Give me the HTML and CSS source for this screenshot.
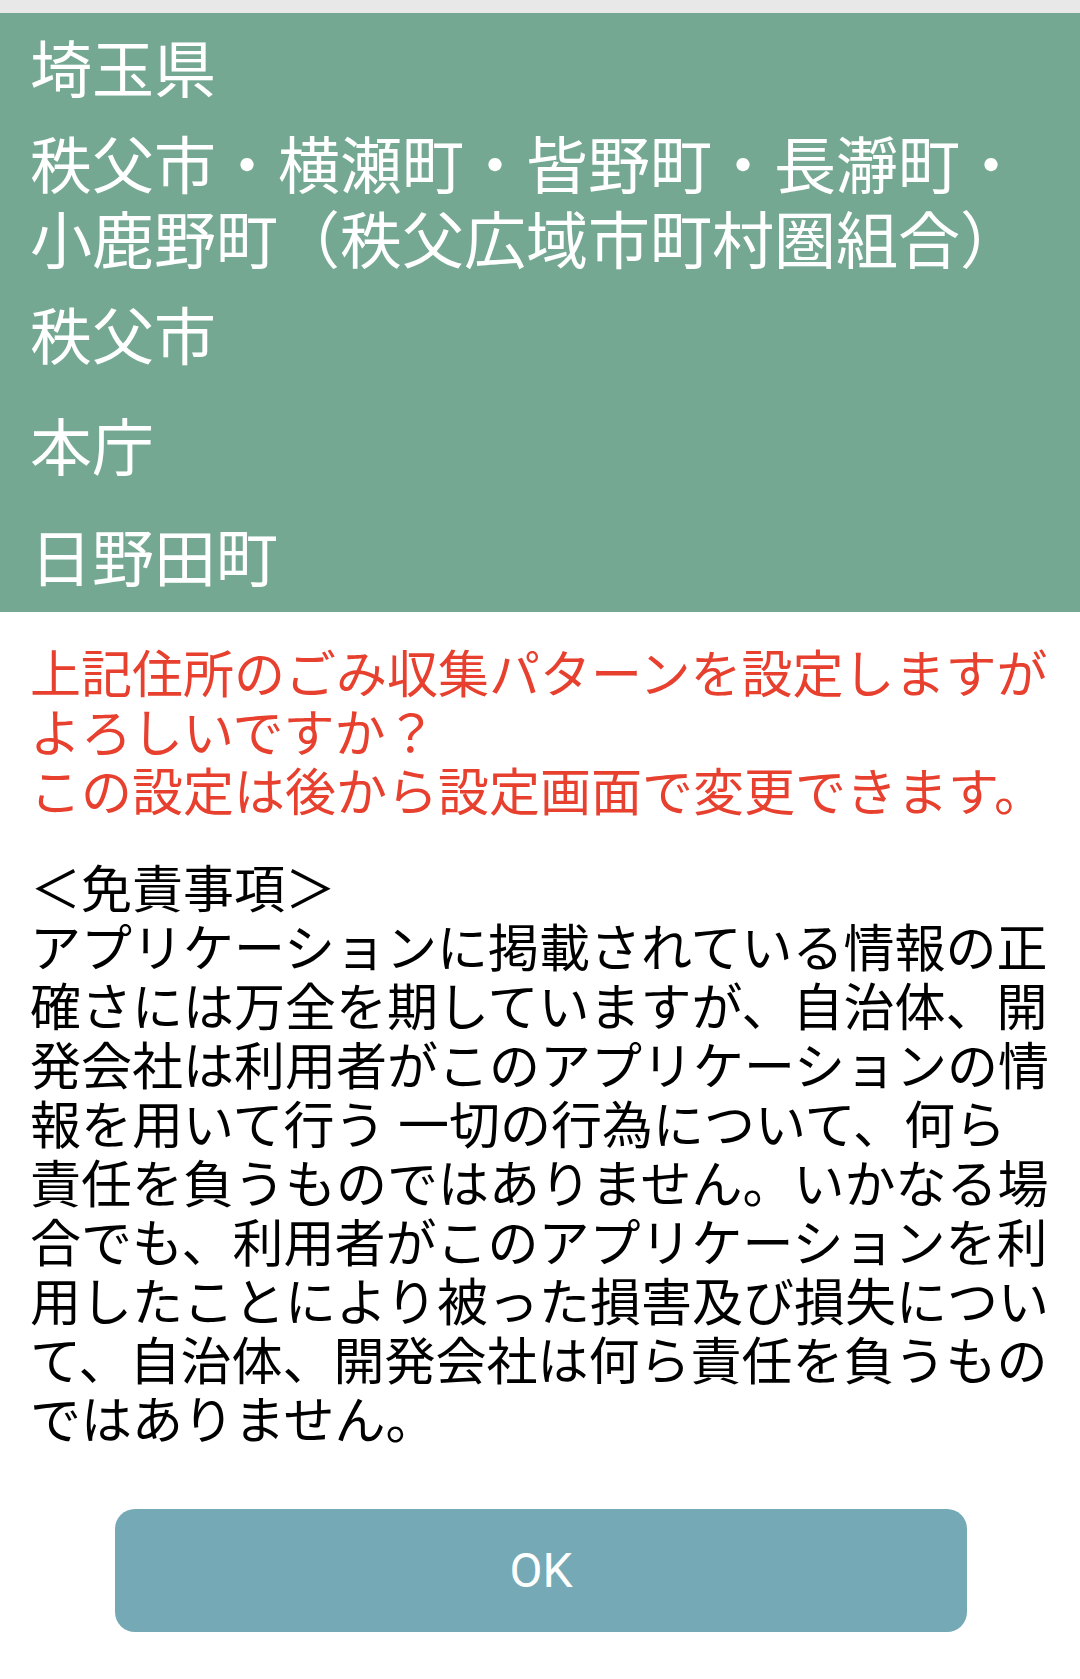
FILE: index.html
```html
<!DOCTYPE html>
<html lang="ja">
<head>
<meta charset="utf-8">
<title>確認</title>
<link rel="stylesheet" href="styles.css">
</head>
<body>
<div class="statusbar"></div>
<section class="address">
  <div class="item">埼玉県</div>
  <div class="item">秩父市・横瀬町・皆野町・長瀞町・小鹿野町（秩父広域市町村圏組合）</div>
  <div class="item">秩父市</div>
  <div class="item spaced">本庁</div>
  <div class="item spaced">日野田町</div>
</section>
<main class="content">
  <p class="confirm">上記住所のごみ収集パターンを設定しますがよろしいですか？<br>この設定は後から設定画面で変更できます。</p>
  <p class="disclaimer">＜免責事項＞<br>アプリケーションに掲載されている情報の正確さには万全を期していますが、自治体、開発会社は利用者がこのアプリケーションの情報を用いて行う 一切の行為について、何ら責任を負うものではありません。いかなる場合でも、利用者がこのアプリケーションを利用したことにより被った損害及び損失について、自治体、開発会社は何ら責任を負うものではありません。</p>
  <div class="actions">
    <button class="ok" type="button">OK</button>
  </div>
</main>
</body>
</html>
```

FILE: styles.css
```css
html, body {
  margin: 0;
  padding: 0;
  background: #ffffff;
}

body {
  width: 1080px;
  font-family: Roboto, "Noto Sans CJK JP", sans-serif;
}

.statusbar {
  height: 13px;
  background: #e8e8e8;
}

.address {
  background: #74a892;
  color: #ffffff;
  padding: 21px 40px 14px 30px;
  display: flex;
  flex-direction: column;
  gap: 21px;
  font-size: 62px;
  line-height: 75px;
}

.address .spaced {
  margin-top: 15px;
}

.content {
  padding: 0 28px 0 30px;
}

.confirm {
  margin: 34px 0 0;
  color: #e8402f;
  font-size: 51px;
  line-height: 59px;
}

.disclaimer {
  margin: 38px 0 0;
  color: #000000;
  font-size: 51px;
  line-height: 59px;
}

.actions {
  display: flex;
  justify-content: center;
  margin-top: 58px;
}

.ok {
  width: 852px;
  height: 123px;
  border: none;
  border-radius: 20px;
  background: #74a9b5;
  color: #ffffff;
  font-family: Roboto, "Noto Sans CJK JP", sans-serif;
  font-size: 48px;
  padding: 0;
}
```
